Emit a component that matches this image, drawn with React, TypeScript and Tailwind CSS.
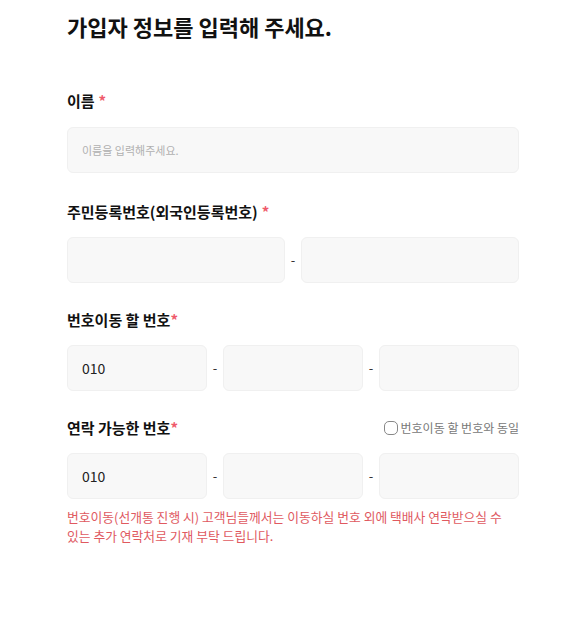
import React from 'react';

const font = { fontFamily: '"Noto Sans CJK KR", "Noto Sans", sans-serif' };

const baseCls =
  'h-[46px] rounded-md border border-[#f0f0f0] bg-[#f8f8f8] px-[14px] text-[#222] placeholder:text-[#b0b0b0] outline-none';
const inputCls = `${baseCls} text-[14px]`;

const Label = ({ text, spaced = true }: { text: string; spaced?: boolean }) => (
  <span className="text-[15px] font-bold leading-[20px] text-[#111]">
    {text}
    <span className={`text-[#ef5a6b] ${spaced ? 'ml-1' : ''}`}>*</span>
  </span>
);

const Dash = () => <span className="w-4 text-center text-[13px] text-[#333]">-</span>;

const PhoneRow = () => (
  <div className="flex items-center">
    <input className={`${inputCls} w-[140px]`} defaultValue="010" />
    <Dash />
    <input className={`${inputCls} w-[140px]`} />
    <Dash />
    <input className={`${inputCls} w-[140px]`} />
  </div>
);

export default function App() {
  return (
    <div className="min-h-[622px] bg-white pl-[67px] pt-[11px]" style={font}>
      <div className="w-[452px]">
        <h1 className="text-[22px] font-bold leading-[30px] text-[#111]">가입자 정보를 입력해 주세요.</h1>

        {/* 이름 */}
        <div className="mt-[47px]">
          <Label text="이름" />
          <input className={`${baseCls} mt-[15px] block w-full text-[11px]`} placeholder="이름을 입력해주세요." />
        </div>

        {/* 주민등록번호 */}
        <div className="mt-[26px]">
          <Label text="주민등록번호(외국인등록번호)" />
          <div className="mt-[14px] flex items-center">
            <input className={`${inputCls} w-[218px]`} />
            <Dash />
            <input className={`${inputCls} w-[218px]`} />
          </div>
        </div>

        {/* 번호이동 할 번호 */}
        <div className="mt-[24px]">
          <Label text="번호이동 할 번호" spaced={false} />
          <div className="mt-[14px]">
            <PhoneRow />
          </div>
        </div>

        {/* 연락 가능한 번호 */}
        <div className="mt-[27px]">
          <div className="flex items-center justify-between">
            <Label text="연락 가능한 번호" spaced={false} />
            <label className="flex items-center gap-[3px] text-[12px] text-[#777]">
              <span className="inline-block h-[14px] w-[14px] rounded-[5px] border border-[#888] bg-white" />
              번호이동 할 번호와 동일
            </label>
          </div>
          <div className="mt-[15px]">
            <PhoneRow />
          </div>
          <p className="mt-[8px] pr-[12px] text-[12.8px] leading-[19px] text-[#e0595f]">
            번호이동(선개통 진행 시) 고객님들께서는 이동하실 번호 외에 택배사 연락받으실 수 있는 추가 연락처로 기재 부탁 드립니다.
          </p>
        </div>
      </div>
    </div>
  );
}
